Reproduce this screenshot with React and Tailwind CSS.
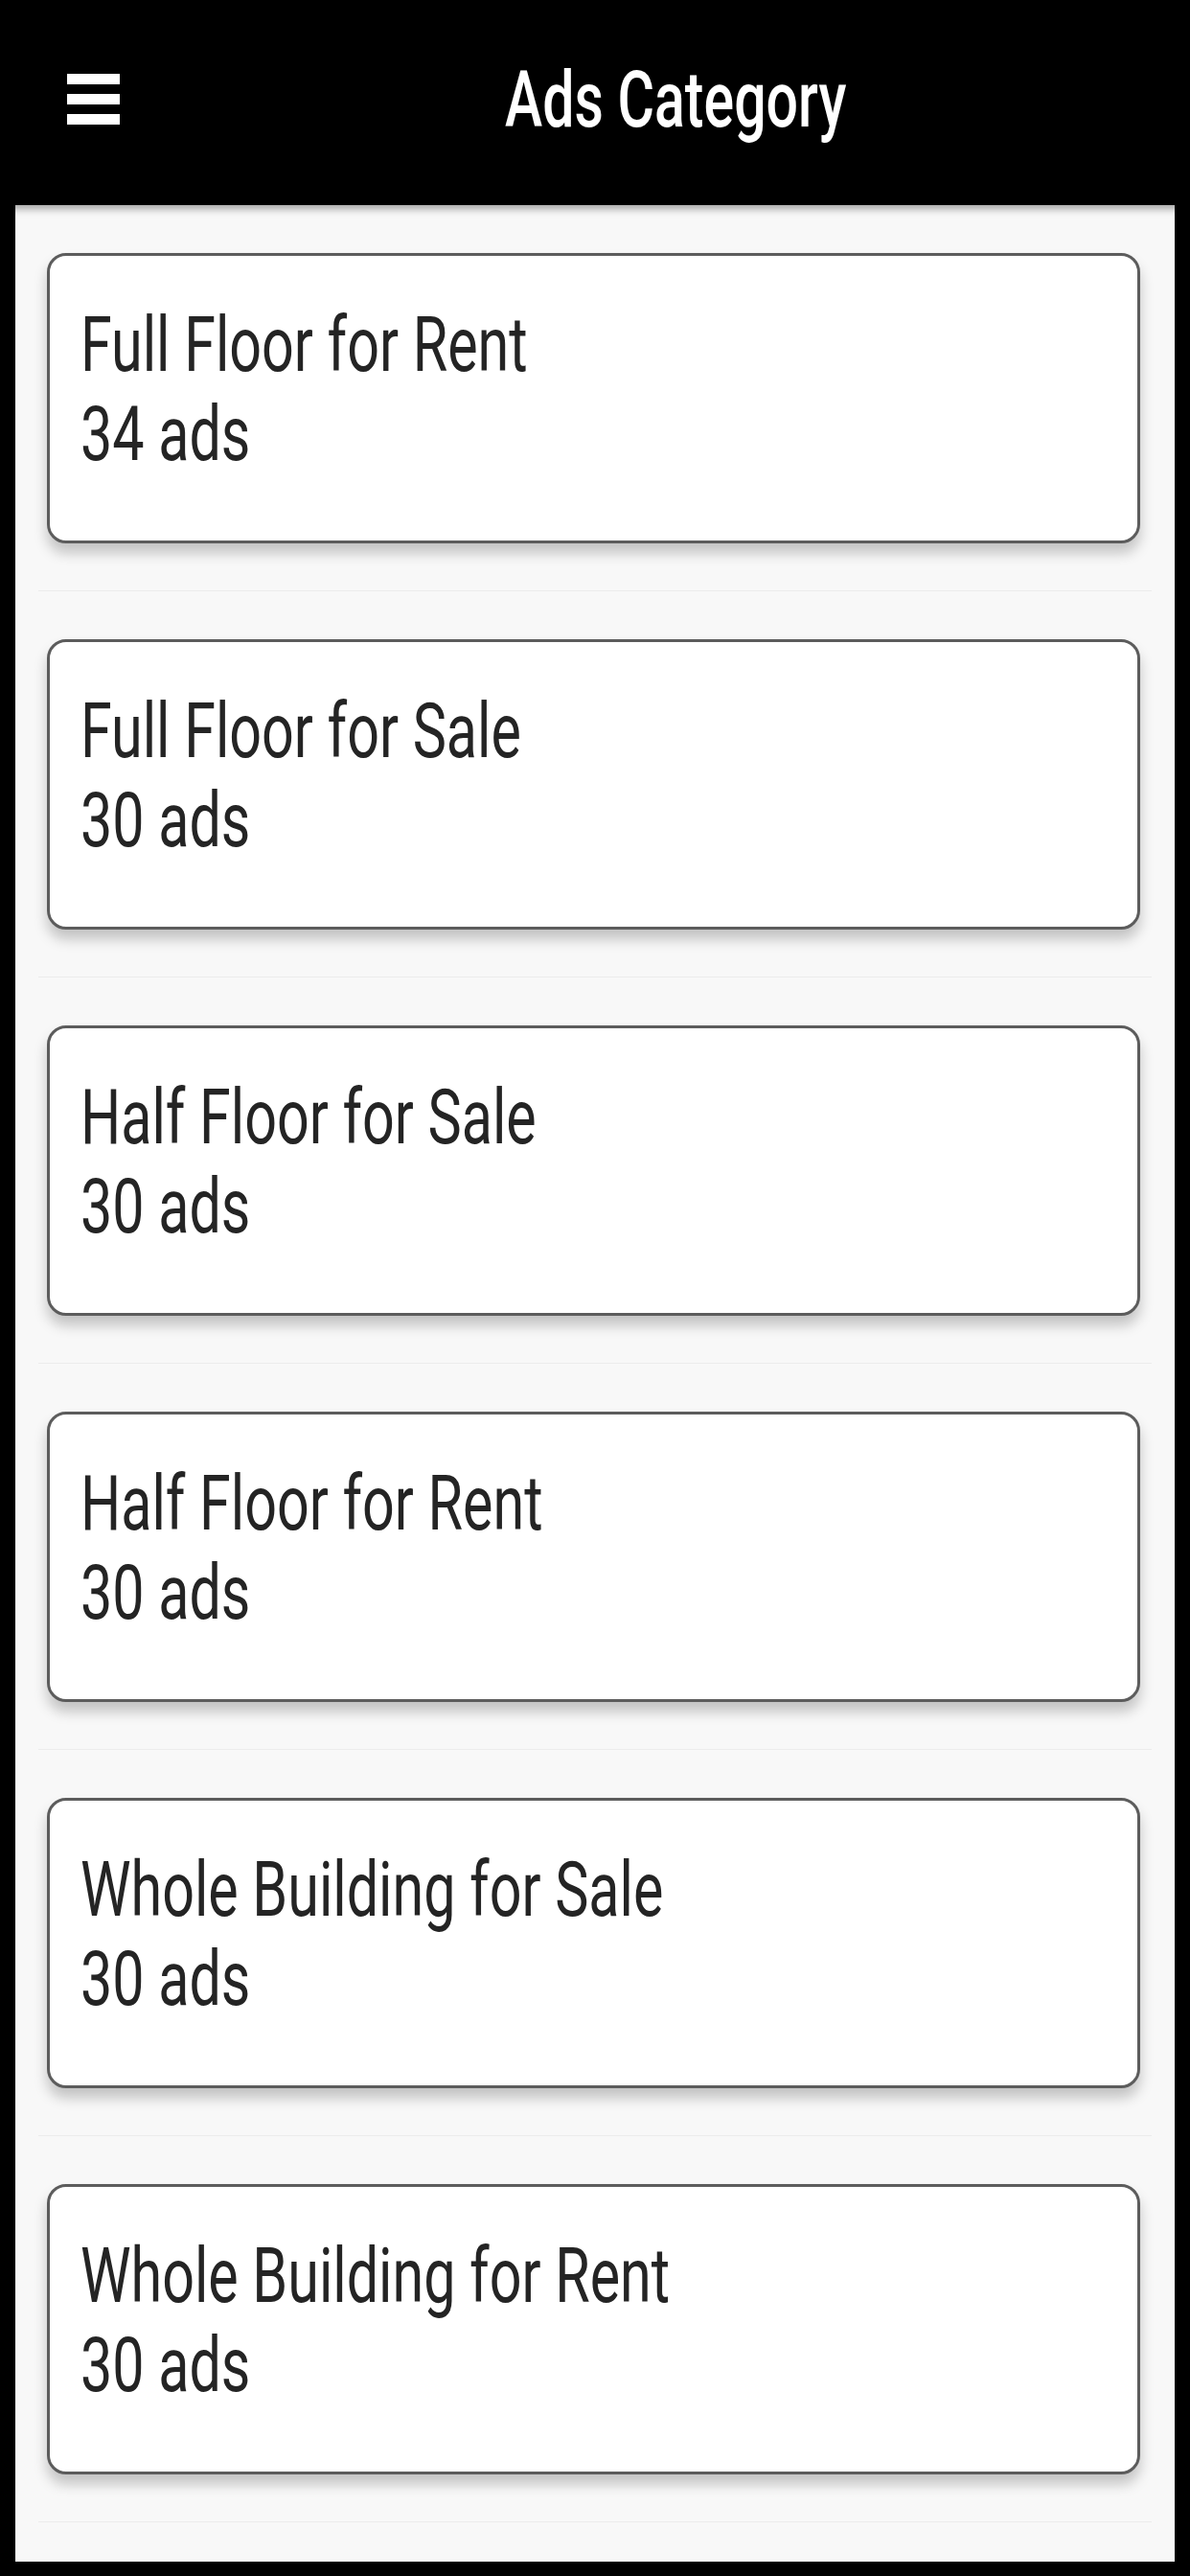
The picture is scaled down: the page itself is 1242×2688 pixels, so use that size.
import React from "react";

const categories = [
  { name: "Full Floor for Rent", count: 34 },
  { name: "Full Floor for Sale", count: 30 },
  { name: "Half Floor for Sale", count: 30 },
  { name: "Half Floor for Rent", count: 30 },
  { name: "Whole Building for Sale", count: 30 },
  { name: "Whole Building for Rent", count: 30 },
];

const CategoryCard = ({ name, count }) => (
  <div className="mx-6 pt-[50px] pb-[49px] border-b border-[#ececec]">
    <div className="ml-[9px] mr-[12px] h-[303px] bg-white rounded-[20px] border-[3px] border-[#5c5c5c] shadow-[0_10px_14px_rgba(0,0,0,0.22)] pt-[47px] pl-[32px]">
      <div className="text-[80px] leading-[93px] text-[#242424] font-['Roboto',sans-serif] whitespace-nowrap">
        <div className="origin-left scale-x-[0.74]">{name}</div>
        <div className="origin-left scale-x-[0.74]">{count} ads</div>
      </div>
    </div>
  </div>
);

const App = () => {
  return (
    <div className="w-[1242px] h-[2688px] bg-black flex flex-col font-['Roboto',sans-serif]">
      {/* Header */}
      <div className="h-[214px] shrink-0 flex items-center pl-[70px] relative z-10 shadow-[0_4px_8px_rgba(0,0,0,0.35)]">
        <div className="flex flex-col gap-[10px] -mt-[8px]">
          <span className="block w-[55px] h-[11px] bg-white" />
          <span className="block w-[55px] h-[11px] bg-white" />
          <span className="block w-[55px] h-[11px] bg-white" />
        </div>
        <div className="ml-[402px] text-white text-[82px] leading-none font-medium whitespace-nowrap origin-left scale-x-[0.72] -mt-[6px]">
          Ads Category
        </div>
      </div>

      {/* List */}
      <div className="flex-1 mx-[16px] mb-[15px] bg-[#f8f8f8] overflow-hidden">
        {categories.map((c) => (
          <CategoryCard key={c.name} name={c.name} count={c.count} />
        ))}
      </div>
    </div>
  );
};

export default App;
